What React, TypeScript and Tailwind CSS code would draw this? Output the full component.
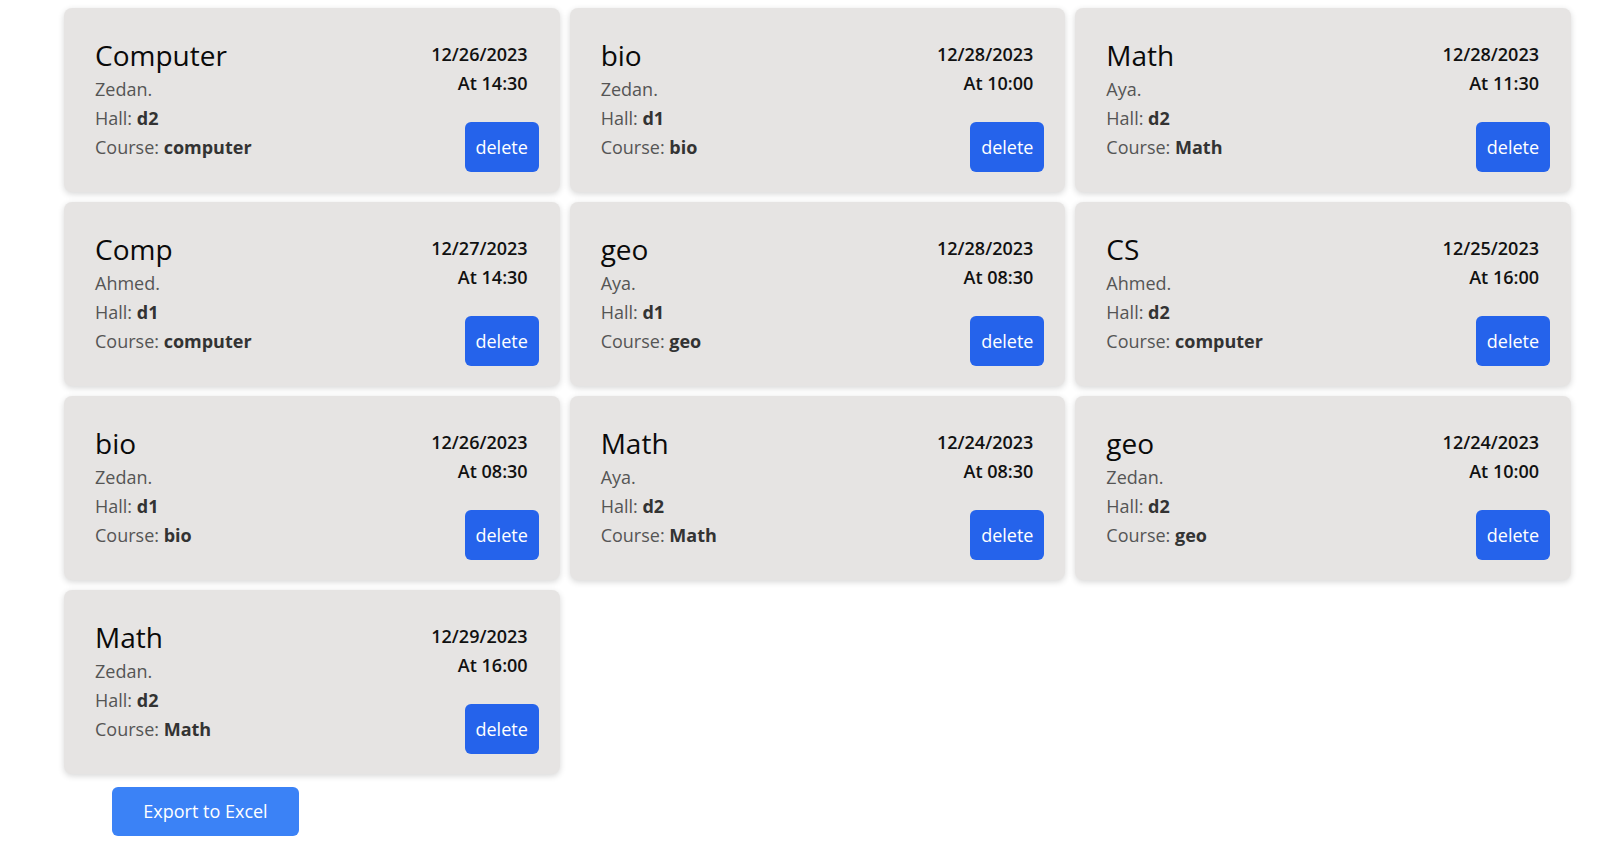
import React from 'react';

type Lecture = {
  title: string;
  doctor: string;
  hall: string;
  course: string;
  date: string;
  time: string;
};

const lectures: Lecture[] = [
  { title: 'Computer', doctor: 'Zedan', hall: 'd2', course: 'computer', date: '12/26/2023', time: '14:30' },
  { title: 'bio', doctor: 'Zedan', hall: 'd1', course: 'bio', date: '12/28/2023', time: '10:00' },
  { title: 'Math', doctor: 'Aya', hall: 'd2', course: 'Math', date: '12/28/2023', time: '11:30' },
  { title: 'Comp', doctor: 'Ahmed', hall: 'd1', course: 'computer', date: '12/27/2023', time: '14:30' },
  { title: 'geo', doctor: 'Aya', hall: 'd1', course: 'geo', date: '12/28/2023', time: '08:30' },
  { title: 'CS', doctor: 'Ahmed', hall: 'd2', course: 'computer', date: '12/25/2023', time: '16:00' },
  { title: 'bio', doctor: 'Zedan', hall: 'd1', course: 'bio', date: '12/26/2023', time: '08:30' },
  { title: 'Math', doctor: 'Aya', hall: 'd2', course: 'Math', date: '12/24/2023', time: '08:30' },
  { title: 'geo', doctor: 'Zedan', hall: 'd2', course: 'geo', date: '12/24/2023', time: '10:00' },
  { title: 'Math', doctor: 'Zedan', hall: 'd2', course: 'Math', date: '12/29/2023', time: '16:00' },
];

function LectureCard({ lecture }: { lecture: Lecture }) {
  return (
    <div className="flex h-[184px] justify-between rounded-lg bg-[#e6e4e3] pl-[31px] pr-[21px] pt-[28px] shadow-[0_2px_6px_rgba(0,0,0,0.16)]">
      <div className="flex flex-col">
        <h2 className="mb-[1px] text-[28px] leading-[38px] font-medium text-[#0a0a0a]">{lecture.title}</h2>
        <p className="text-[18px] leading-[29px] text-[#555]">{lecture.doctor}.</p>
        <p className="text-[18px] leading-[29px] text-[#555]">
          Hall: <span className="font-bold text-[#333]">{lecture.hall}</span>
        </p>
        <p className="text-[18px] leading-[29px] text-[#555]">
          Course: <span className="font-bold text-[#333]">{lecture.course}</span>
        </p>
      </div>
      <div className="flex flex-col items-end pt-[4px]">
        <p className="pr-[11px] text-[18px] leading-[29px] font-semibold text-[#111]">{lecture.date}</p>
        <p className="pr-[11px] text-[18px] leading-[29px] font-semibold text-[#111]">At {lecture.time}</p>
        <button className="mt-[24px] h-[50px] w-[74px] rounded-md bg-[#2563eb] text-[18px] text-white">
          delete
        </button>
      </div>
    </div>
  );
}

export default function App() {
  return (
    <div
      className="min-h-screen bg-white pl-[64px] pr-[29px] pt-[8px]"
      style={{ fontFamily: '"Open Sans", "Noto Sans", sans-serif' }}
    >
      <div className="grid grid-cols-3 gap-[10px]">
        {lectures.map((lecture, i) => (
          <LectureCard key={i} lecture={lecture} />
        ))}
      </div>
      {/* Export */}
      <div className="pl-[48px] pt-[13px]">
        <button className="h-[49px] w-[187px] rounded-md bg-[#3b82f6] text-[18px] text-white">
          Export to Excel
        </button>
      </div>
    </div>
  );
}
